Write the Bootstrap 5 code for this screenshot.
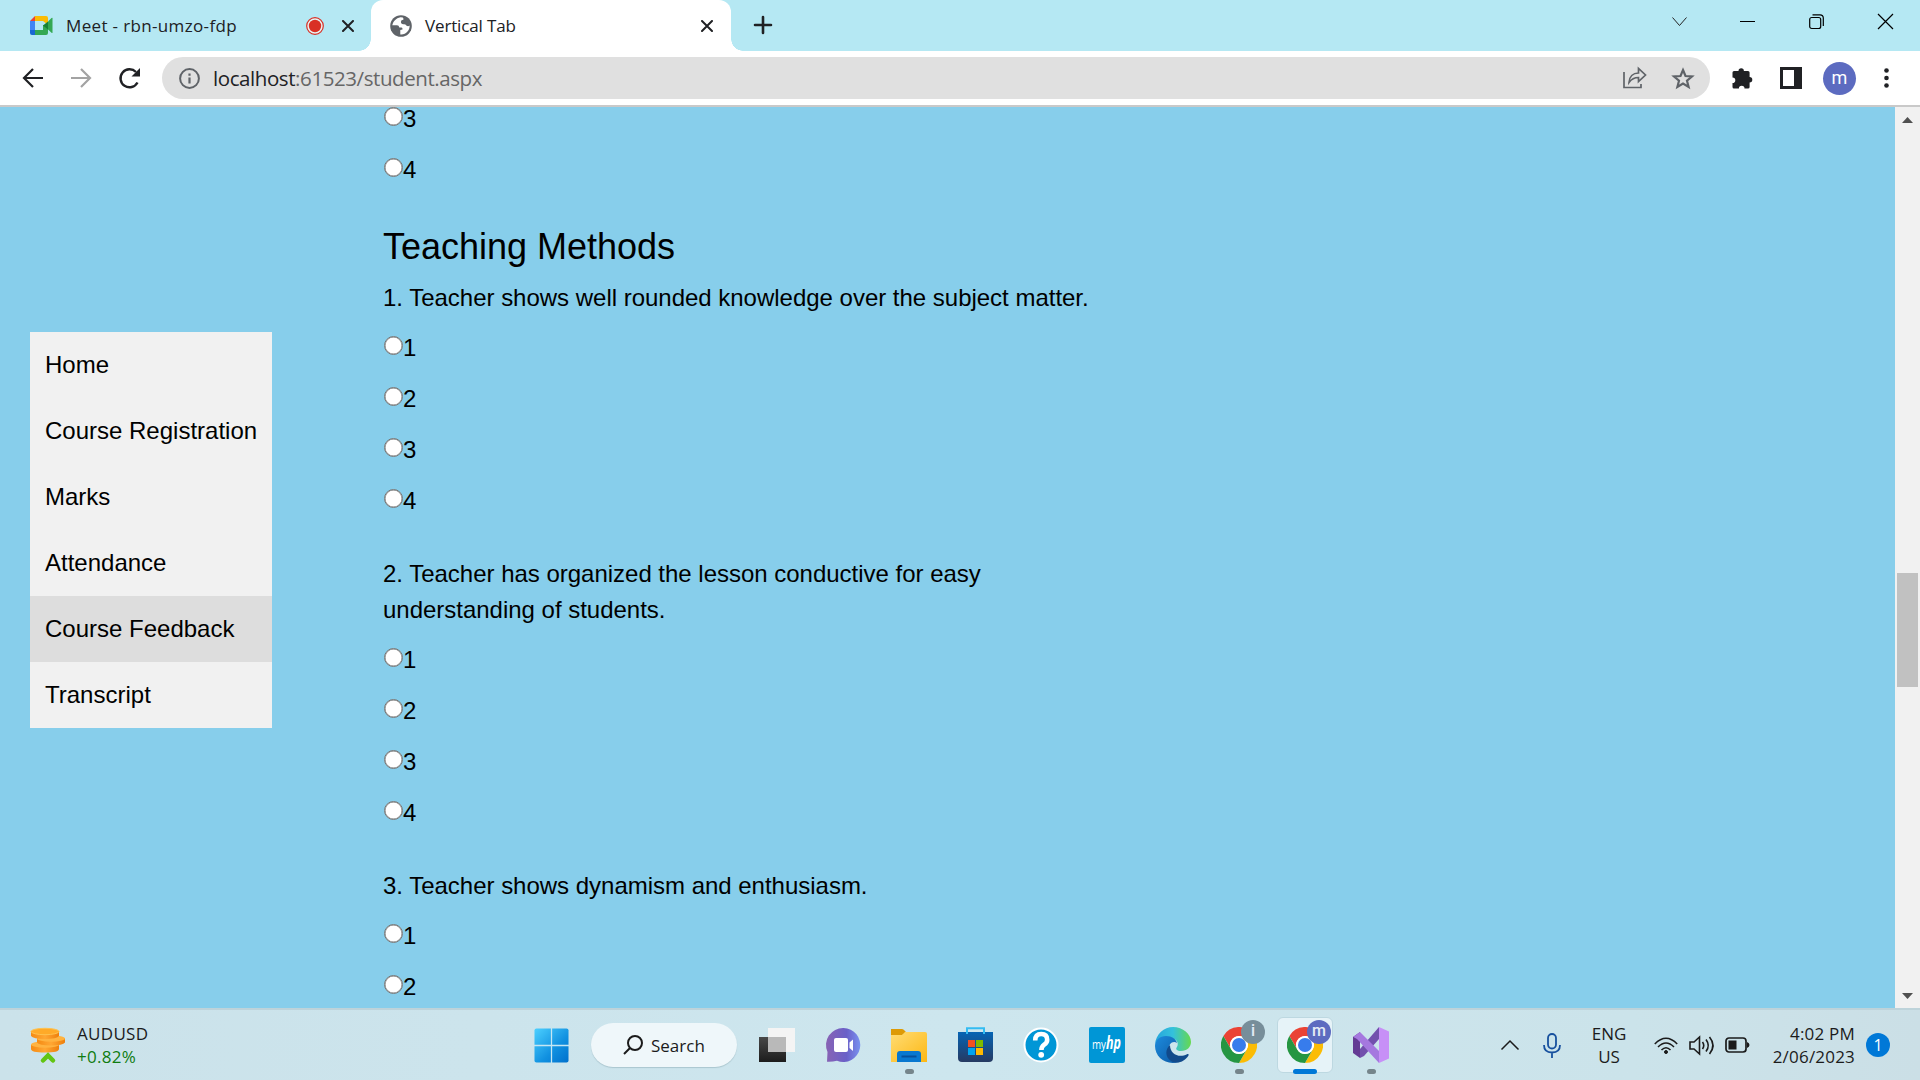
<!DOCTYPE html>
<html lang="en">
<head>
<meta charset="utf-8">
<title>Vertical Tab</title>
<link rel="stylesheet" href="https://cdn.jsdelivr.net/npm/bootstrap@5.3.0/dist/css/bootstrap.min.css">
<style>
  html, body { height: 1080px; overflow: hidden; }
  body { width: 1920px; font-family: "Open Sans", "Noto Sans", sans-serif; color: #202124; background: #87ceeb; }
  svg { display: block; flex: none; overflow: visible; }
  .tabstrip { height: 51px; background: #b5e8f3; }
  .tab-bg { width: 371px; padding: 0 15px 0 30px; }
  .tab-label { font-size: 17px; line-height: 51px; white-space: nowrap; margin-left: 13px; letter-spacing: -.15px; }
  .tab-label.wide { letter-spacing: .35px; }
  .tab-front { width: 360px; background: #fff; border-radius: 12px 12px 0 0; padding: 0 18px 0 19px; position: relative; }
  .tab-front::before, .tab-front::after { content: ""; position: absolute; bottom: 0; width: 12px; height: 12px; }
  .tab-front::before { left: -12px; background: radial-gradient(circle at 0 0, #b5e8f3 11.5px, #fff 12px); }
  .tab-front::after { right: -12px; background: radial-gradient(circle at 100% 0, #b5e8f3 11.5px, #fff 12px); }
  .toolbar { height: 56px; background: #fff; border-bottom: 2px solid #c9c9c9; padding: 6px 26px 6px 22px; }
  .omnibox { height: 42px; border-radius: 21px; background: #e0e0e0; padding: 0 16px 0 17px; margin-left: 21px; }
  .url { font-size: 20.5px; letter-spacing: -.42px; color: #666; white-space: nowrap; margin-left: 13px; }
  .url b { font-weight: 400; color: #202124; }
  .avatar { width: 33px; height: 33px; border-radius: 50%; background: #5c6bc0; color: #fff; font: 18px/32px Roboto, sans-serif; text-align: center; }
  .viewport { height: 901px; background: #87ceeb; font-family: "Liberation Sans", Arial, sans-serif; font-size: 24px; line-height: 36px; color: #000; overflow: hidden; }
  .side-tabs { width: 242px; margin: 225px 0 0 30px; background: #f1f1f1; }
  .side-tabs a { display: block; padding: 15px; height: 66px; color: #000; text-decoration: none; white-space: nowrap; }
  .side-tabs a.current { background: #ddd; }
  .survey { width: 740px; margin: 0 0 0 111px; letter-spacing: -.015px; }
  .survey h2 { font-size: 36px; line-height: 43px; font-weight: 400; margin: 37px 0 12px; }
  .question { margin: 0 0 14px; }
  .options { display: flex; flex-direction: column; gap: 15px; margin-bottom: 37px; }
  .options label { display: flex; height: 36px; padding-left: 1px; }
  .options input { appearance: none; width: 19px; height: 19px; margin: 6px 0 0 0; border: 1px solid #767676; box-shadow: inset 0 0 0 .5px #767676; border-radius: 50%; background: #fff; }
  .options label.clipped { height: 30px; line-height: 24px; }
  .options label.clipped input { margin-top: 0; }
  .scroller { width: 25px; background: #f1f1f1; padding: 10px 2px 9px; }
  .thumb { width: 21px; height: 114px; background: #c1c1c1; margin-top: 450px; }
  .taskbar { height: 72px; background: linear-gradient(90deg, #cbe2ea, #cde6ee 50%, #cbe3ea 85%, #cbdfe6); border-top: 2px solid #bdd3da; color: #1b1b1b; font-size: 17px; line-height: 23px; }
  .widget { width: 534px; padding-left: 30px; }
  .quote { margin-left: 11px; letter-spacing: .3px; }
  .rise { color: #107c10; }
  .search-pill { width: 146px; height: 44px; border-radius: 22px; background: #eff7fa; box-shadow: 0 1px 1px #aac6cf; margin: 0 22px; padding-left: 32px; }
  .app { width: 66px; height: 70px; display: flex; align-items: center; justify-content: center; position: relative; }
  .app.run::after { content: ""; position: absolute; left: 29px; bottom: 6px; width: 9px; height: 5px; border-radius: 3px; background: #75858b; }
  .app.active::before { content: ""; position: absolute; inset: 7px 5px; background: #e6f3f8; border: 1px solid #bdd8e1; border-radius: 6px; }
  .app.active::after { left: 21px; width: 24px; background: #0078d7; }
  .app svg { position: relative; }
  .profile { position: absolute; left: 35px; top: 10px; width: 24px; height: 24px; border-radius: 50%; color: #e4ebf5; text-align: center; font: 500 16px/22px Roboto, sans-serif; z-index: 1; }
  .profile.gray { background: #778e9a; }
  .profile.indigo { background: #5c6bc0; }
  .clock { margin-left: 21px; width: 84px; white-space: nowrap; letter-spacing: .2px; }
  .count { width: 24px; height: 24px; border-radius: 50%; background: #0078d7; color: #fff; text-align: center; font-size: 16px; line-height: 24px; margin-left: 11px; }
</style>
<script src="https://cdn.jsdelivr.net/npm/bootstrap@5.3.0/dist/js/bootstrap.bundle.min.js"></script>
</head>
<body class="d-flex flex-column m-0">

<svg width="0" height="0" class="position-absolute">
  <defs>
    <linearGradient id="gw" x1="0" y1="0" x2="1" y2="1"><stop offset="0" stop-color="#4cd0ff"/><stop offset=".6" stop-color="#1090e0"/><stop offset="1" stop-color="#0070cc"/></linearGradient>
    <linearGradient id="gt" x1="0" y1="0" x2="0" y2="1"><stop offset="0" stop-color="#484848"/><stop offset="1" stop-color="#1c1c1c"/></linearGradient>
    <linearGradient id="gc" x1="0" y1="0" x2="1" y2="0"><stop offset="0" stop-color="#8863b4"/><stop offset=".6" stop-color="#6a60c8"/><stop offset="1" stop-color="#7a92f0"/></linearGradient>
    <linearGradient id="gf" x1="0" y1="0" x2="1" y2="1"><stop offset="0" stop-color="#ffdc75"/><stop offset="1" stop-color="#fdb813"/></linearGradient>
    <linearGradient id="gs" x1="0" y1="0" x2="0" y2="1"><stop offset="0" stop-color="#0664b4"/><stop offset="1" stop-color="#263a62"/></linearGradient>
    <linearGradient id="ge" x1="0" y1="0" x2="1" y2="0"><stop offset="0" stop-color="#26a5dc"/><stop offset=".5" stop-color="#34c1dc"/><stop offset="1" stop-color="#66d94e"/></linearGradient>
    <linearGradient id="ge2" x1="0" y1="0" x2="1" y2="1"><stop offset="0" stop-color="#1d8bdd"/><stop offset="1" stop-color="#0c59a4"/></linearGradient>
    <linearGradient id="go" x1="0" y1="0" x2="1" y2="0"><stop offset="0" stop-color="#f58a12"/><stop offset=".5" stop-color="#ffa733"/><stop offset="1" stop-color="#ee7f0c"/></linearGradient>
    <symbol id="cross" viewBox="0 0 12 12"><path d="M1 1l10 10M11 1L1 11" stroke="#202124" stroke-width="2" stroke-linecap="round"/></symbol>
    <symbol id="chrome" viewBox="0 0 36 36">
      <circle cx="18" cy="18" r="17.500" fill="#fff"/>
      <path d="M2.400 9A18 18 0 0 1 33.600 9H18A9 9 0 0 0 10.200 22.500Z" fill="#ea4335"/>
      <path d="M33.600 9A18 18 0 0 1 18 36L25.800 22.500A9 9 0 0 0 18 9Z" fill="#fbbc05"/>
      <path d="M2.400 9L10.200 22.500A9 9 0 0 0 25.800 22.500L18 36A18 18 0 0 1 2.400 9Z" fill="#259642"/>
      <circle cx="18" cy="18" r="8.800" fill="#fff"/><circle cx="18" cy="18" r="7" fill="#377cec"/>
    </symbol>
  </defs>
</svg>

<div class="tabstrip d-flex flex-shrink-0">
  <div class="tab-bg d-flex align-items-center">
    <svg width="23" height="19" viewBox="0 0 23 19"><path d="M5 0v5H0z" fill="#ea4335"/><path d="M0 5h5v9H0z" fill="#4285f4"/><path d="M0 14h5v5H2q-2 0-2-2z" fill="#1967d2"/><path d="M5 0h11q2 0 2 2v7l-5-4H5z" fill="#fbbc04"/><path d="M5 14h8v-5h5v8q0 2-2 2H5z" fill="#34a853"/><path d="M13 9.500l5-4v8z" fill="#188038"/><path d="M18 5.500l3.500-3.500q1-.7 1 .4v14q0 1-1 .3L18 13.500z" fill="#34a853"/></svg>
    <span class="tab-label wide">Meet - rbn-umzo-fdp</span>
    <svg class="ms-auto" width="18" height="18" viewBox="0 0 18 18"><circle cx="9" cy="9" r="8.300" fill="#e8f4f4" stroke="#d93025" stroke-width="1.200"/><circle cx="9" cy="9" r="6.200" fill="#d93025"/></svg>
    <svg width="12" height="12" style="margin:0 2px 0 18px"><use href="#cross"/></svg>
  </div>
  <div class="tab-front d-flex align-items-center">
    <svg width="22" height="22" viewBox="0 0 22 22"><circle cx="11" cy="11" r="10.800" fill="#5f6368"/><path d="M10.500 2.200C6 3 3 6.500 2.300 10.200H7q2 0 2.300 2.200h2.200q1.200.2 1 2l-2.200.5v4.500C16 20 20 15 19.600 10.500q-1.500 1.600-3.300 0-.8-1.600-3-1.200-2.500-.1-2.400-2.500 0-2 2.500-2 .3-1.500-.6-2.300z" fill="#fff"/></svg>
    <span class="tab-label">Vertical Tab</span>
    <svg class="ms-auto" width="12" height="12"><use href="#cross"/></svg>
  </div>
  <svg width="18" height="18" style="margin:16px 0 0 23px" viewBox="0 0 18 18"><path d="M9 1v16M1 9h16" stroke="#202124" stroke-width="2.600" stroke-linecap="round"/></svg>
  <div class="d-flex ms-auto align-items-start" style="padding:14px 27px 0 0">
    <svg width="15" height="15" viewBox="0 0 15 15" fill="none" stroke="#222"><path d="M.5 3.500l7 8 7-8"/></svg>
    <svg width="15" height="15" viewBox="0 0 15 15" style="margin-left:53px" stroke="#000"><path d="M0 7.500h15"/></svg>
    <svg width="15" height="15" viewBox="0 0 15 15" style="margin-left:54px" fill="none" stroke="#000" stroke-width="1.200"><rect x=".7" y="3.500" width="11" height="11" rx="2"/><path d="M3.500.8H11q3.300 0 3.300 3.300V12"/></svg>
    <svg width="15" height="15" viewBox="0 0 15 15" style="margin-left:54px" stroke="#000" stroke-width="1.200"><path d="M0 0l15 15M15 0L0 15"/></svg>
  </div>
</div>

<div class="toolbar d-flex align-items-center flex-shrink-0">
  <svg width="22" height="20" viewBox="0 0 22 20" fill="none" stroke="#202124" stroke-width="2.200"><path d="M21 10H2.500M11 1L2 10l9 9"/></svg>
  <svg width="22" height="20" viewBox="0 0 22 20" style="margin-left:27px" fill="none" stroke="#a3a3a3" stroke-width="2.200"><path d="M0 10h18.500M10 1l9 9-9 9"/></svg>
  <svg width="22" height="20" viewBox="0 0 22 20" style="margin-left:26px" fill="none"><path d="M18.500 14.500a9 9 0 1 1-1.500-10.500" stroke="#202124" stroke-width="2.400"/><path d="M21 0v8.500h-8.500z" fill="#202124"/></svg>
  <div class="omnibox d-flex align-items-center flex-grow-1">
    <svg width="21" height="21" viewBox="0 0 21 21"><circle cx="10.500" cy="10.500" r="9.400" fill="none" stroke="#5f6368" stroke-width="2"/><path d="M10.500 9.500v6M10.500 5.500v2.200" stroke="#5f6368" stroke-width="2.200"/></svg>
    <span class="url"><b>localhost</b>:61523/student.aspx</span>
    <svg class="ms-auto" width="24" height="22" viewBox="0 0 24 22" fill="none" stroke="#5f6368" stroke-width="1.700"><path d="M1 5v15.500h17V17"/><path d="M6 15.500c.3-6 4-9.500 9.500-9.500V1.500L22.500 8l-7 6.500V10.500c-4 0-7 1.500-9.500 5z"/></svg>
    <svg width="22" height="21" viewBox="0 0 22 21" style="margin-left:25px" fill="none" stroke="#5f6368" stroke-width="2.200"><path d="M11 2l2.500 6 6.500.5-5 4.200 1.600 6.300L11 15.600 5.400 19 7 12.700 2 8.500 8.500 8z"/></svg>
  </div>
  <svg width="22" height="22" viewBox="0 0 22 22" style="margin-left:22px" fill="#202124"><path d="M2 4h4.500a2.700 2.700 0 1 1 5.400 0H16q1.600 0 1.600 1.600V10a2.700 2.700 0 1 1 0 5.400v4.500q0 1.600-1.600 1.600h-3.500a2.800 2.800 0 0 0-5.600 0H2Q.5 21.500.5 20v-4a2.800 2.800 0 0 0 0-5.600V5.500Q.5 4 2 4z"/></svg>
  <svg width="22" height="22" viewBox="0 0 22 22" style="margin-left:26px"><rect x="1.500" y="1.500" width="19" height="19" fill="#fff" stroke="#202124" stroke-width="3"/><path d="M14 0h8v22h-8z" fill="#202124"/></svg>
  <div class="avatar" style="margin-left:21px">m</div>
  <svg width="5" height="20" viewBox="0 0 5 20" style="margin:0 5px 0 28px" fill="#202124"><circle cx="2.500" cy="2.500" r="2.300"/><circle cx="2.500" cy="10" r="2.300"/><circle cx="2.500" cy="17.500" r="2.300"/></svg>
</div>

<div class="viewport d-flex align-items-start flex-shrink-0">
  <nav class="side-tabs flex-shrink-0">
    <a href="#">Home</a><a href="#">Course Registration</a><a href="#">Marks</a><a href="#">Attendance</a><a href="#" class="current">Course Feedback</a><a href="#">Transcript</a>
  </nav>
  <main class="survey flex-shrink-0">
    <div class="options"><label class="clipped"><input type="radio" name="q0">3</label><label><input type="radio" name="q0">4</label></div>
    <h2>Teaching Methods</h2>
    <p class="question">1. Teacher shows well rounded knowledge over the subject matter.</p>
    <div class="options"><label><input type="radio" name="q1">1</label><label><input type="radio" name="q1">2</label><label><input type="radio" name="q1">3</label><label><input type="radio" name="q1">4</label></div>
    <p class="question">2. Teacher has organized the lesson conductive for easy<br>understanding of students.</p>
    <div class="options"><label><input type="radio" name="q2">1</label><label><input type="radio" name="q2">2</label><label><input type="radio" name="q2">3</label><label><input type="radio" name="q2">4</label></div>
    <p class="question">3. Teacher shows dynamism and enthusiasm.</p>
    <div class="options"><label><input type="radio" name="q3">1</label><label><input type="radio" name="q3">2</label></div>
  </main>
  <div class="scroller d-flex flex-column align-items-center align-self-stretch ms-auto">
    <svg width="11" height="6" viewBox="0 0 11 6"><path d="M0 6L5.500 0 11 6z" fill="#505050"/></svg>
    <div class="thumb"></div>
    <svg class="mt-auto" width="11" height="6" viewBox="0 0 11 6"><path d="M0 0l5.500 6L11 0z" fill="#505050"/></svg>
  </div>
</div>

<footer class="taskbar d-flex align-items-center flex-shrink-0">
  <div class="widget d-flex align-items-center flex-shrink-0">
    <svg width="36" height="36" viewBox="0 0 36 36"><path d="M1 18v4q0 3.500 14 3.500T29 22v-4z" fill="url(#go)"/><ellipse cx="15" cy="17.500" rx="14" ry="3.200" fill="#ffb340"/><path d="M7 11v4.500q2 3 14 3t14-3V11z" fill="url(#go)"/><ellipse cx="21" cy="11.500" rx="14" ry="3.200" fill="#ffb340"/><path d="M1 4v5q2 3 14 3t14-3V4z" fill="url(#go)"/><ellipse cx="15" cy="4.500" rx="14" ry="3.200" fill="#ffaa28" stroke="#ffc24f"/><path d="M13 33.500l5-5 5 5" fill="none" stroke="#62c512" stroke-width="4.500" stroke-linecap="round"/></svg>
    <div class="quote"><div>AUDUSD</div><div class="rise">+0.82%</div></div>
  </div>
  <svg width="35" height="35" viewBox="0 0 36 36"><rect x=".5" y=".5" width="35" height="35" rx="2" fill="url(#gw)"/><path d="M18 0v36M0 18h36" stroke="#c5e6f3" stroke-width="1.300"/></svg>
  <div class="search-pill d-flex align-items-center flex-shrink-0">
    <svg width="20" height="20" viewBox="0 0 20 20" fill="none" stroke="#1b1b1b" stroke-width="2"><circle cx="12" cy="8" r="7"/><path d="M7 13l-6 6"/></svg>
    <span style="margin-left:8px">Search</span>
  </div>
  <div class="d-flex" style="margin-left:-15px">
    <div class="app"><svg width="36" height="34" viewBox="0 0 36 34"><path d="M0 9h27v25H0z" fill="url(#gt)"/><path d="M9 0h27v24H9z" fill="#f4f4f4"/><path d="M9 9h18v15H9z" fill="#b9b9b9"/></svg></div>
    <div class="app"><svg width="35" height="34" viewBox="0 0 35 34"><path d="M17.500 0a17 17 0 1 1-6.500 32.800Q6 34 1 33.700L1.500 24A17 17 0 0 1 17.500 0z" fill="url(#gc)"/><rect x="8" y="10" width="14" height="14" rx="2" fill="#fff"/><path d="M23.500 14.500l3.500-3v11.500l-3.500-3z" fill="#fff"/></svg></div>
    <div class="app run"><svg width="36" height="34" viewBox="0 0 36 34"><path d="M0 1h11q1.500 0 2.500 1.500L16 5 11 7H0z" fill="#dd9a06"/><path d="M0 7h11l3-3h20q2 0 2 2v28H0z" fill="url(#gf)"/><path d="M6 34v-8q0-3 3-3h18q3 0 3 3v8z" fill="#0878d0"/><path d="M10.500 28.500h15" stroke="#05509c" stroke-width="2"/></svg></div>
    <div class="app"><svg width="35" height="36" viewBox="0 0 35 36"><path d="M0 5h35v26q0 4-4 4H4q-4 0-4-4z" fill="url(#gs)"/><path d="M9 7V1.200h17V7" fill="none" stroke="#33bcf2" stroke-width="2"/><path d="M10 13h7v7h-7z" fill="#f25022"/><path d="M18 13h7v7h-7z" fill="#7fba00"/><path d="M10 21h7v7h-7z" fill="#00a4ef"/><path d="M18 21h7v7h-7z" fill="#ffb900"/></svg></div>
    <div class="app"><svg width="36" height="36" viewBox="0 0 36 36"><circle cx="18" cy="18" r="16.500" fill="#0096d6" stroke="#fff" stroke-width="2"/><path d="M12.200 13.500q0-6.500 6-6.500t6 5.700q0 3-3 5-2.800 2-2.800 5.300" fill="none" stroke="#fff" stroke-width="4.600"/><circle cx="18.200" cy="27.800" r="2.900" fill="#fff"/></svg></div>
    <div class="app"><svg width="36" height="36" viewBox="0 0 36 36"><rect width="36" height="36" rx="2" fill="#0096d6"/><text x="3" y="21.500" font-family="Open Sans" font-size="12" textLength="14" lengthAdjust="spacingAndGlyphs" fill="#fff">my</text><text x="17" y="22" font-family="Open Sans" font-size="18" font-style="italic" font-weight="700" textLength="15" lengthAdjust="spacingAndGlyphs" fill="#fff">hp</text></svg></div>
    <div class="app"><svg width="36" height="36" viewBox="0 0 36 36"><path d="M0 17C1 7 9 0 18 0c10 0 18 7 18 15 0 5-4 9-10 9-4 0-6-2-4-4 2-4 0-8-6-9C9 10 2 12 0 17z" fill="url(#ge)"/><path d="M0 19c0-6 5-10 11-10 6 0 10 3 11 7-4-3-9 1-8 7 1 7 6 11 10 12C11 39 0 30 0 19z" fill="url(#ge2)"/><path d="M15 18c-5 4-5 12 1 16 7 4 14 0 17.500-5.500.5-1-.3-1.800-1.500-1.200-8 4-17 0-17-9.300z" fill="#114a8b"/></svg></div>
    <div class="app run"><svg width="36" height="36"><use href="#chrome"/></svg><span class="profile gray">i</span></div>
    <div class="app run active"><svg width="36" height="36"><use href="#chrome"/></svg><span class="profile indigo">m</span></div>
    <div class="app run"><svg width="36" height="36" viewBox="0 0 36 36"><path d="M0 10l7-5v26l-7-5z" fill="#643b94"/><path d="M7 31v-9L26 0v12L11 29z" fill="#7250ad"/><path d="M0 10l7-5 19 19v12L4 12z" fill="#a578df"/><path d="M0 26V10l7 5v6z" fill="#643b94"/><path d="M26 0l10 4.500v27L26 36z" fill="#c790f7"/></svg></div>
  </div>
  <div class="d-flex align-items-center ms-auto" style="padding-right:30px">
    <svg width="18" height="10" viewBox="0 0 18 10" fill="none" stroke="#1b1b1b" stroke-width="1.500"><path d="M.5 9.500L9 1l8.500 8.500"/></svg>
    <svg width="18" height="25" viewBox="0 0 18 25" style="margin-left:24px" fill="none" stroke="#17509e" stroke-width="1.800"><rect x="5" y="1" width="8" height="14.500" rx="4"/><path d="M1 12q0 7.500 8 7.500t8-7.500M9 19.500V25"/></svg>
    <div class="text-center" style="margin-left:30px;width:36px">ENG<br>US</div>
    <svg width="24" height="17" viewBox="0 0 24 17" style="margin-left:27px" fill="none" stroke="#1b1b1b" stroke-width="1.600"><path d="M.8 7Q12-4.500 23.200 7M4 10q8-8 16 0M7.500 13q4.500-4.500 9 0"/><circle cx="12" cy="15" r="1.500" fill="#1b1b1b" stroke-width="1"/></svg>
    <svg width="25" height="21" viewBox="0 0 25 21" style="margin-left:11px" fill="none" stroke="#1b1b1b" stroke-width="1.600"><path d="M1 7h4l5.500-5v17L5 14H1z"/><path d="M13.500 7q2.500 3.500 0 7M17 4.500q4.500 6 0 12M20.500 2q7 8.500 0 17"/></svg>
    <svg width="25" height="16" viewBox="0 0 25 16" style="margin-left:11px"><rect x="1" y="1" width="20" height="14" rx="3" fill="none" stroke="#1b1b1b" stroke-width="1.700"/><rect x="3.500" y="3.500" width="8" height="9" fill="#1b1b1b"/><path d="M22 5q2.500 1 2.500 3T22 11z" fill="#1b1b1b"/></svg>
    <div class="clock text-end">4:02 PM<br>2/06/2023</div>
    <div class="count">1</div>
  </div>
</footer>
</body>
</html>
